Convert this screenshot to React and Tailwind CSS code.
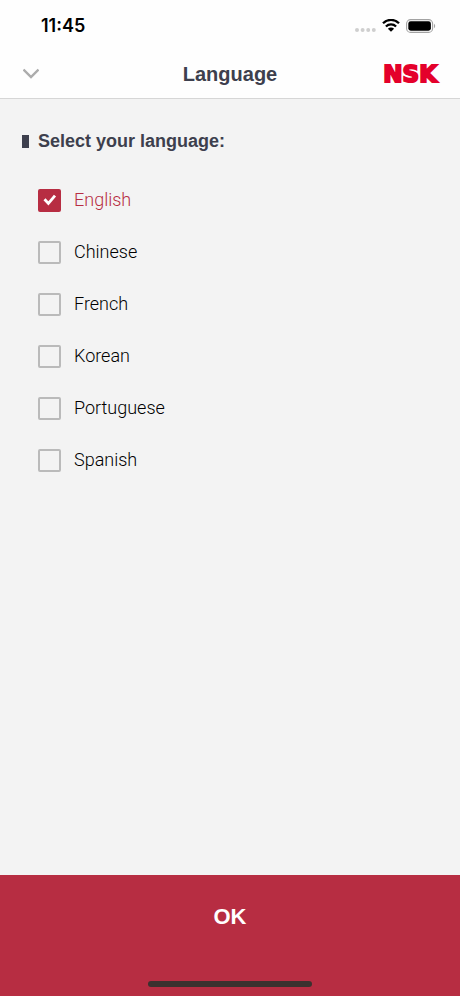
import { useState } from 'react';

const languages = [
  'English',
  'Chinese',
  'French',
  'Korean',
  'Portuguese',
  'Spanish',
];

function StatusBar() {
  return (
    <div className="flex h-[50px] items-center justify-between pt-px pr-6 pl-[41px]">
      <span className="font-['Inter',sans-serif] text-[18px] leading-6 font-semibold text-black">
        11:45
      </span>
      <div className="flex items-center gap-[6px]">
        <svg width="21" height="18" viewBox="0 0 21 18" fill="#cfcfcf">
          <circle cx="2" cy="13" r="2" />
          <circle cx="7.6" cy="13" r="2" />
          <circle cx="13.2" cy="13" r="2" />
          <circle cx="18.8" cy="13" r="2" />
        </svg>
        <svg width="18" height="14" viewBox="0 0 18 14" fill="none">
          <path
            d="M1 4.2a11.4 11.4 0 0 1 16 0M3.9 7.5a7.3 7.3 0 0 1 10.2 0"
            stroke="#000"
            strokeWidth="2.3"
          />
          <path d="M9 12.8 5.9 9.8a4.4 4.4 0 0 1 6.2 0z" fill="#000" />
        </svg>
        <svg width="30" height="14" viewBox="0 0 30 14" fill="none">
          <rect x="0.6" y="0.6" width="26" height="12.8" rx="4" stroke="#a3a3a3" strokeWidth="1.1" />
          <rect x="2.3" y="2.3" width="22.6" height="9.4" rx="2.4" fill="#000" />
          <path d="M28 4.8c1.6.7 1.6 3.7 0 4.4z" fill="#a3a3a3" />
        </svg>
      </div>
    </div>
  );
}

function Header() {
  return (
    <header className="grid h-[49px] grid-cols-[1fr_auto_1fr] items-center border-b border-[#d6d6d6] px-[23px]">
      <button aria-label="Back" className="justify-self-start">
        <svg width="16" height="12" viewBox="0 0 16 12" fill="none">
          <path d="M0.5 1.5 8 9l7.5-7.5" stroke="#acacac" strokeWidth="2.4" />
        </svg>
      </button>
      <h1 className="text-[20px] leading-6 font-bold text-[#3d3f4d]">Language</h1>
      <span className="justify-self-end font-['DejaVu_Sans',sans-serif] text-[23px] leading-6 font-bold text-[#e4002b] [-webkit-text-stroke:2px_#e4002b] [paint-order:stroke]">
        NSK
      </span>
    </header>
  );
}

function LanguageOption({ name, checked, onSelect }) {
  return (
    <label
      className={`flex h-[52px] items-center gap-[13px] font-['Roboto',sans-serif] text-[18px] leading-6 font-light ${
        checked ? 'text-[#b72d42]' : 'text-black'
      }`}
    >
      <span className="grid size-[23px]">
        <input
          type="checkbox"
          checked={checked}
          onChange={onSelect}
          className="col-start-1 row-start-1 size-[23px] appearance-none rounded-[2px] border-2 border-[#bababa] checked:border-[#b72d42] checked:bg-[#b72d42]"
        />
        {checked && (
          <svg
            className="pointer-events-none col-start-1 row-start-1"
            width="23"
            height="23"
            viewBox="0 0 23 23"
            fill="none"
          >
            <path d="M6.5 10.2 10.4 14.4 17 6.6" stroke="#fff" strokeWidth="2.8" />
          </svg>
        )}
      </span>
      {name}
    </label>
  );
}

export default function App() {
  const [selected, setSelected] = useState('English');

  return (
    <div className="flex min-h-screen flex-col bg-[#f3f3f3] font-['Liberation_Sans',Arial,sans-serif]">
      <div className="bg-[#fefefe]">
        <StatusBar />
        <Header />
      </div>

      <main className="flex-1 px-[22px] pt-[30px]">
        <h2 className="flex items-center gap-[9px] text-[18px] leading-6 font-bold text-[#3d3f4d]">
          <span className="h-[13px] w-[7px] bg-[#3d3f4d]" />
          Select your language:
        </h2>
        <div className="flex flex-col items-start pt-[21px] pl-4">
          {languages.map((name) => (
            <LanguageOption
              key={name}
              name={name}
              checked={selected === name}
              onSelect={() => setSelected(name)}
            />
          ))}
        </div>
      </main>

      <footer className="flex h-[121px] flex-col items-center justify-between bg-[#b72d42] pb-[9px]">
        <button className="h-[84px] w-full text-[22px] leading-6 font-bold text-white">OK</button>
        <div className="h-[6px] w-[164px] rounded-full bg-[#3b312f]" />
      </footer>
    </div>
  );
}
